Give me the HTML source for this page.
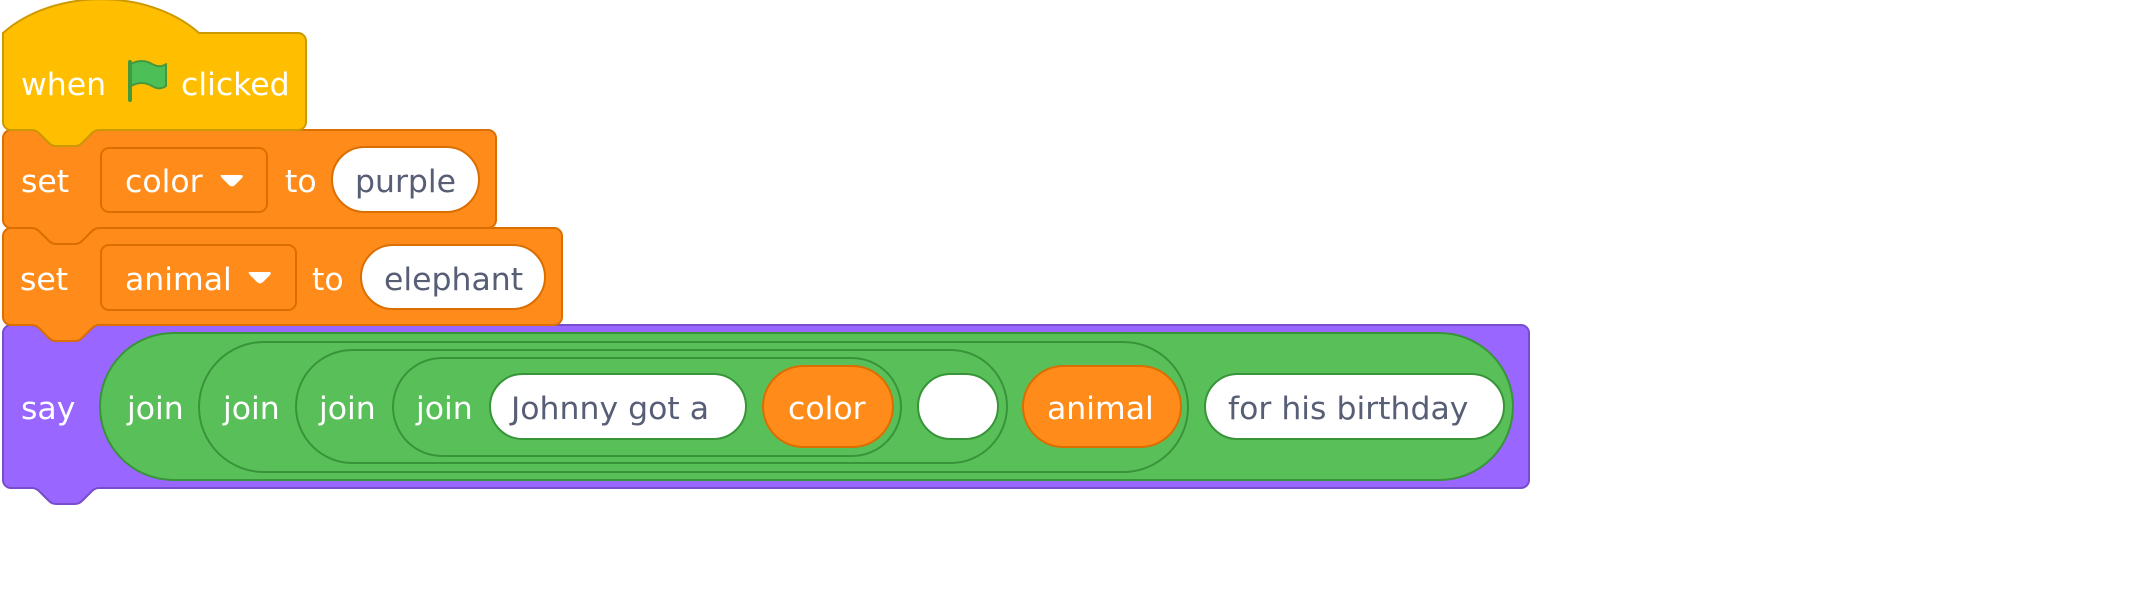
<!DOCTYPE html>
<html><head><meta charset="utf-8"><style>
html,body{margin:0;padding:0;background:#fff;width:2146px;height:616px;overflow:hidden}
svg{display:block}
text{font-family:"DejaVu Sans","Liberation Sans",sans-serif;font-size:31.5px}
.w{fill:#fff}.d{fill:#575e75}
</style></head><body>
<svg width="2146" height="616" viewBox="0 0 2146 616" xmlns="http://www.w3.org/2000/svg">
<!-- say block -->
<path d="M3,333 a8,8 0 0 1 8,-8 H32 c4,0 6,2 8,4 l8,8 c2,2 4,4 8,4 h19 c4,0 6,-2 8,-4 l8,-8 c2,-2 4,-4 8,-4 H1521 a8,8 0 0 1 8,8 V480 a8,8 0 0 1 -8,8 H99 c-4,0 -6,2 -8,4 l-8,8 c-2,2 -4,4 -8,4 h-19 c-4,0 -6,-2 -8,-4 l-8,-8 c-2,-2 -4,-4 -8,-4 H11 a8,8 0 0 1 -8,-8 Z" fill="#9966ff" stroke="#774dcb" stroke-width="2"/>
<text class="w" x="21" y="419">say</text>
<rect x="100" y="333" width="1413" height="147" rx="73.5" fill="#59c059" stroke="#389438" stroke-width="2"/>
<text class="w" x="127" y="419">join</text>
<rect x="199" y="342" width="989" height="130" rx="65" fill="#59c059" stroke="#389438" stroke-width="2"/>
<text class="w" x="223" y="419">join</text>
<rect x="296" y="350" width="711" height="113" rx="56.5" fill="#59c059" stroke="#389438" stroke-width="2"/>
<text class="w" x="319" y="419">join</text>
<rect x="393" y="358" width="508" height="98" rx="49" fill="#59c059" stroke="#389438" stroke-width="2"/>
<text class="w" x="416" y="419">join</text>
<rect x="490" y="374" width="256" height="65" rx="32.5" fill="#fff" stroke="#389438" stroke-width="2"/>
<text class="d" x="511" y="419">Johnny got a</text>
<rect x="763" y="366" width="130" height="81" rx="40.5" fill="#ff8c1a" stroke="#db6e00" stroke-width="2"/>
<text class="w" x="788" y="419">color</text>
<rect x="918" y="374" width="80" height="65" rx="32.5" fill="#fff" stroke="#389438" stroke-width="2"/>
<rect x="1023" y="366" width="158" height="81" rx="40.5" fill="#ff8c1a" stroke="#db6e00" stroke-width="2"/>
<text class="w" x="1047" y="419">animal</text>
<rect x="1205" y="374" width="299" height="65" rx="32.5" fill="#fff" stroke="#389438" stroke-width="2"/>
<text class="d" x="1228" y="419">for his birthday</text>

<!-- set animal -->
<path d="M3,236 a8,8 0 0 1 8,-8 H32 c4,0 6,2 8,4 l8,8 c2,2 4,4 8,4 h19 c4,0 6,-2 8,-4 l8,-8 c2,-2 4,-4 8,-4 H554 a8,8 0 0 1 8,8 V317 a8,8 0 0 1 -8,8 H99 c-4,0 -6,2 -8,4 l-8,8 c-2,2 -4,4 -8,4 h-19 c-4,0 -6,-2 -8,-4 l-8,-8 c-2,-2 -4,-4 -8,-4 H11 a8,8 0 0 1 -8,-8 Z" fill="#ff8c1a" stroke="#db6e00" stroke-width="2"/>
<text class="w" x="20" y="290">set</text>
<rect x="101" y="245" width="195" height="65" rx="8" fill="#ff8c1a" stroke="#db6e00" stroke-width="2"/>
<text class="w" x="125" y="290">animal</text>
<path d="M249,272 h20 q3,0 1,3 l-7,7 q-3,3 -6,0 l-7,-7 q-2,-3 -1,-3 Z" fill="#fff"/>
<text class="w" x="312" y="290">to</text>
<rect x="361" y="245" width="184" height="64" rx="32" fill="#fff" stroke="#db6e00" stroke-width="2"/>
<text class="d" x="384" y="290">elephant</text>

<!-- set color -->
<path d="M3,138 a8,8 0 0 1 8,-8 H32 c4,0 6,2 8,4 l8,8 c2,2 4,4 8,4 h19 c4,0 6,-2 8,-4 l8,-8 c2,-2 4,-4 8,-4 H488 a8,8 0 0 1 8,8 V220 a8,8 0 0 1 -8,8 H99 c-4,0 -6,2 -8,4 l-8,8 c-2,2 -4,4 -8,4 h-19 c-4,0 -6,-2 -8,-4 l-8,-8 c-2,-2 -4,-4 -8,-4 H11 a8,8 0 0 1 -8,-8 Z" fill="#ff8c1a" stroke="#db6e00" stroke-width="2"/>
<text class="w" x="21" y="192">set</text>
<rect x="101" y="148" width="166" height="64" rx="8" fill="#ff8c1a" stroke="#db6e00" stroke-width="2"/>
<text class="w" x="125" y="192">color</text>
<path d="M221,175 h20 q3,0 1,3 l-7,7 q-3,3 -6,0 l-7,-7 q-2,-3 -1,-3 Z" fill="#fff"/>
<text class="w" x="285" y="192">to</text>
<rect x="332" y="147" width="147" height="65" rx="32.5" fill="#fff" stroke="#db6e00" stroke-width="2"/>
<text class="d" x="355" y="192">purple</text>

<!-- hat -->
<path d="M3,33 c51,-45 145,-45 196,0 H298 a8,8 0 0 1 8,8 V122 a8,8 0 0 1 -8,8 H99 c-4,0 -6,2 -8,4 l-8,8 c-2,2 -4,4 -8,4 h-19 c-4,0 -6,-2 -8,-4 l-8,-8 c-2,-2 -4,-4 -8,-4 H11 a8,8 0 0 1 -8,-8 Z" fill="#ffbf00" stroke="#cc9900" stroke-width="2"/>
<text class="w" x="21" y="95">when</text>
<path d="M131,64 c9,-5 16,-3 21,0 c6,3 10,3 14,0 v22 c-4,3 -9,3 -14,0 c-5,-3 -12,-5 -21,0 Z" fill="#4cbf56" stroke="#45993d" stroke-width="2" stroke-linejoin="round"/>
<line x1="130" y1="62" x2="130" y2="100" stroke="#45993d" stroke-width="4" stroke-linecap="round"/>
<text class="w" x="181" y="95">clicked</text>
</svg>
</body></html>
